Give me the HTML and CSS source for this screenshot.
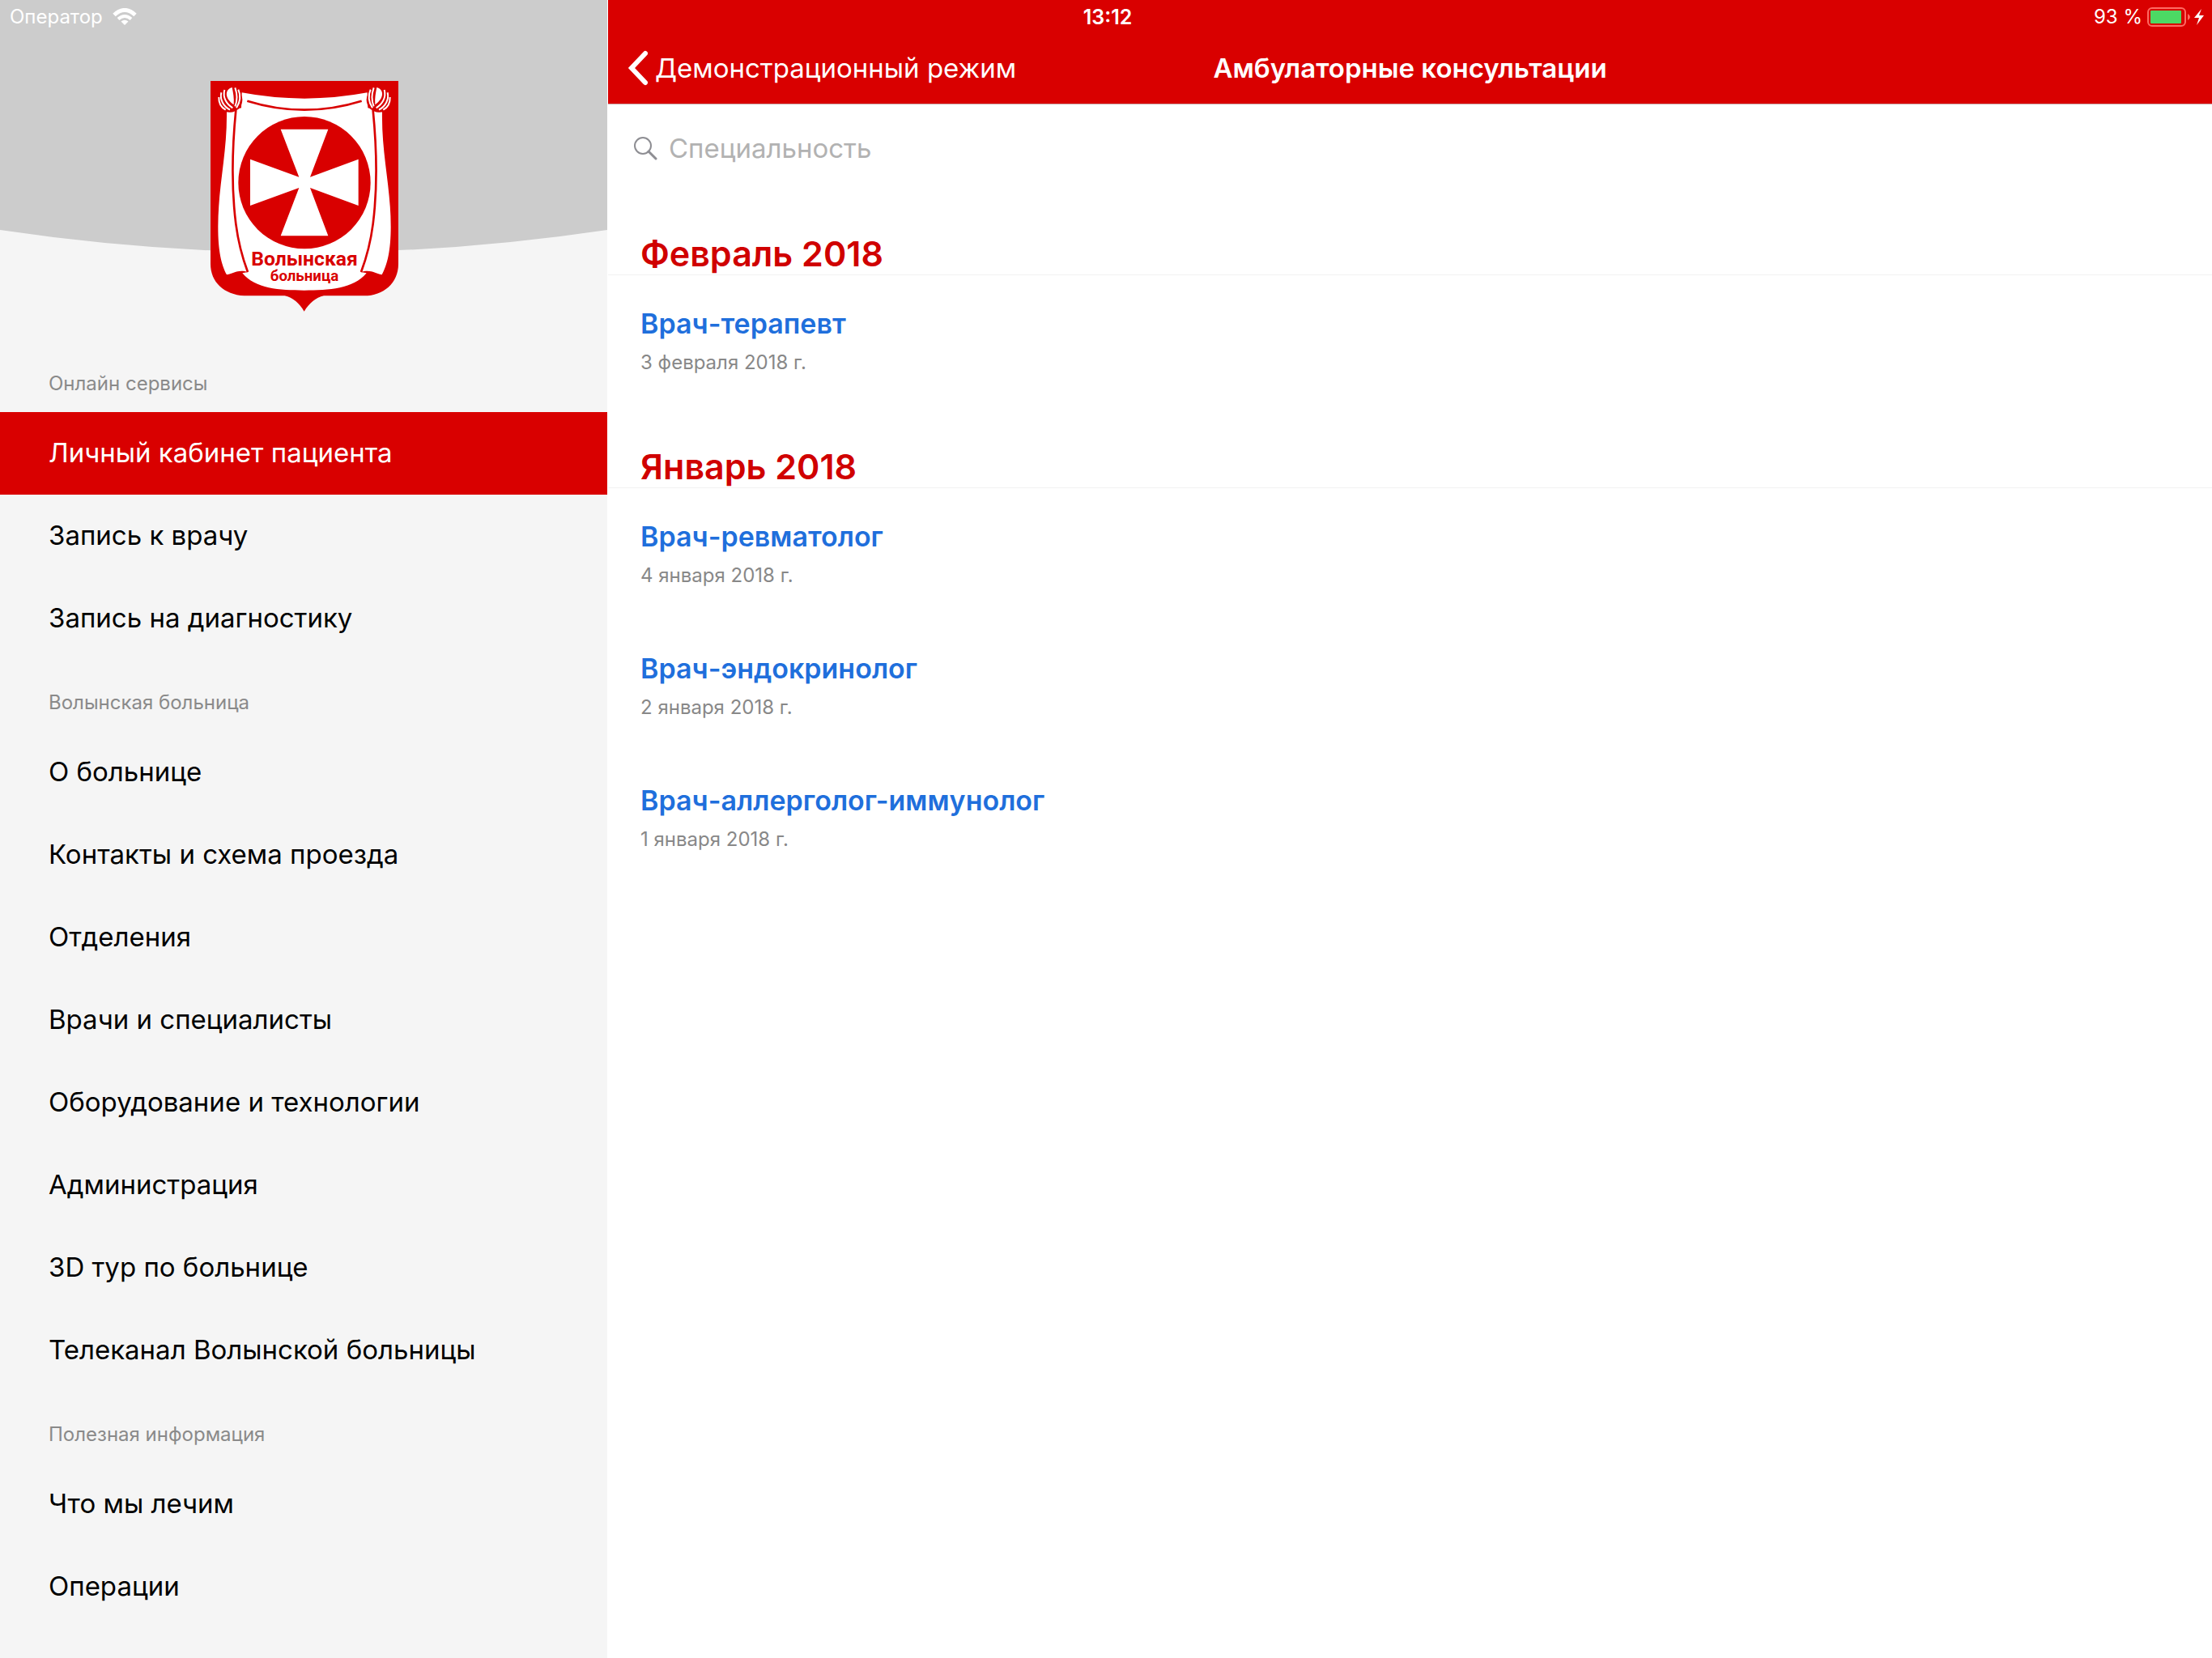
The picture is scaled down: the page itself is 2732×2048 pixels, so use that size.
FILE: index.html
```html
<!DOCTYPE html>
<html lang="ru">
<head>
<meta charset="utf-8">
<meta name="viewport" content="width=device-width, initial-scale=1">
<title>Амбулаторные консультации</title>
<link rel="stylesheet" href="styles.css">
</head>
<body>
<div class="app">
  <div class="status-bar">
    <div class="status-left">
      <span>Оператор</span>
      <svg class="wifi" viewBox="0 0 30 22" aria-hidden="true"><path d="M2 8.500Q15 -3.500 28 8.500" fill="none" stroke="#fff" stroke-width="5"/><path d="M7 13.500Q15 6.500 23 13.500" fill="none" stroke="#fff" stroke-width="4"/><path d="M15 21L10.500 16.500Q15 13 19.500 16.500Z" fill="#fff"/></svg>
    </div>
    <span class="clock">13:12</span>
    <div class="status-right">
      <span>93 %</span>
      <svg class="battery" viewBox="0 0 72 24" aria-hidden="true"><rect x="1" y="1" width="46" height="22" rx="5" fill="none" stroke="#ff6b63" stroke-width="2"/><rect x="4" y="4" width="38" height="16" rx="1" fill="#4cd964"/><path d="M50 8Q53 10 53 12T50 16Z" fill="#ff6b63"/><path d="M67 2L58 13H64L61 22L70 10H64Z" fill="#fff"/></svg>
    </div>
  </div>

  <aside class="sidebar">
    <div class="brand">
      <svg class="brand-curve" viewBox="0 0 750 312" preserveAspectRatio="none" aria-hidden="true"><path d="M0 0H750V284Q375 340 0 284Z" fill="#ccc"/></svg>
      <svg class="emblem" viewBox="60 60 696 855" role="img" aria-label="Волынская больница">
        <path d="M60 60H756V738C756 810 700 856 630 856H480C450 862 425 885 407 914C390 885 365 862 335 856H185C110 852 60 805 60 738Z" fill="#d90000"/>
        <path d="M176 103Q408 147 641 103L643 160L696 175C693 330 728 450 728 600C728 690 715 740 695 778C666 772 656 758 616 768L638 772C590 830 500 836 407 836C315 836 226 830 178 772L200 768C160 758 150 772 120 778C100 740 88 690 88 600C88 450 122 330 120 175L174 160Z" fill="#fff"/>
        <g fill="none" stroke="#d90000" stroke-width="8">
          <path d="M196 134Q408 200 620 134"/>
          <path d="M154 168C138 330 140 480 154 590C163 660 178 715 198 768"/>
          <path d="M662 168C678 330 676 480 662 590C653 660 638 715 618 768"/>
        </g>
        <g id="knot">
          <circle cx="132" cy="130" r="46" fill="#d90000"/>
          <path d="M140 84C112 92 112 124 146 148C148 124 144 104 140 84Z" fill="#fff"/>
          <g fill="none" stroke="#fff" stroke-width="6">
            <path d="M112 93C104 122 120 146 142 160"/>
            <path d="M100 103C94 130 108 154 132 167"/>
            <path d="M91 120C90 140 100 158 116 167"/>
            <path d="M151 85C160 110 160 132 151 154"/>
            <path d="M163 92C172 112 170 138 156 160"/>
          </g>
        </g>
        <use href="#knot" transform="translate(816 0) scale(-1 1)"/>
        <circle cx="408" cy="437" r="245" fill="#d90000"/>
        <path d="M320 239H496L429 416L608 350V522L429 456L496 634H320L388 456L207 522V350L388 416Z" fill="#fff"/>
        <text class="emblem-name" x="408" y="745" text-anchor="middle">Волынская</text>
        <text class="emblem-kind" x="408" y="800" text-anchor="middle">больница</text>
      </svg>
    </div>

    <nav class="menu">
      <h2 class="menu-title">Онлайн сервисы</h2>
      <a class="menu-item menu-item-active" href="#" aria-current="page">Личный кабинет пациента</a>
      <a class="menu-item" href="#">Запись к врачу</a>
      <a class="menu-item" href="#">Запись на диагностику</a>
      <h2 class="menu-title">Волынская больница</h2>
      <a class="menu-item" href="#">О больнице</a>
      <a class="menu-item" href="#">Контакты и схема проезда</a>
      <a class="menu-item" href="#">Отделения</a>
      <a class="menu-item" href="#">Врачи и специалисты</a>
      <a class="menu-item" href="#">Оборудование и технологии</a>
      <a class="menu-item" href="#">Администрация</a>
      <a class="menu-item" href="#">3D тур по больнице</a>
      <a class="menu-item" href="#">Телеканал Волынской больницы</a>
      <h2 class="menu-title">Полезная информация</h2>
      <a class="menu-item" href="#">Что мы лечим</a>
      <a class="menu-item" href="#">Операции</a>
    </nav>
  </aside>

  <main class="content">
    <header class="nav-bar">
      <button class="back" type="button">
        <svg class="chevron" viewBox="0 0 26 44" aria-hidden="true"><path d="M22 4L5 22L22 40" fill="none" stroke="#fff" stroke-width="6" stroke-linecap="round" stroke-linejoin="miter"/></svg>
        <span>Демонстрационный режим</span>
      </button>
      <h1 class="nav-title">Амбулаторные консультации</h1>
    </header>

    <label class="search">
      <svg class="search-icon" viewBox="0 0 30 30" aria-hidden="true"><circle cx="12" cy="12" r="10" fill="none" stroke="#8e8e93" stroke-width="2"/><path d="M19 19L28 28" stroke="#8e8e93" stroke-width="3" stroke-linecap="round"/></svg>
      <input class="search-input" type="search" placeholder="Специальность" aria-label="Специальность">
    </label>

    <section>
      <h2 class="month">Февраль 2018</h2>
      <article class="visit"><a class="visit-title" href="#">Врач-терапевт</a><p class="visit-date">3 февраля 2018 г.</p></article>
    </section>
    <section>
      <h2 class="month">Январь 2018</h2>
      <article class="visit"><a class="visit-title" href="#">Врач-ревматолог</a><p class="visit-date">4 января 2018 г.</p></article>
      <article class="visit"><a class="visit-title" href="#">Врач-эндокринолог</a><p class="visit-date">2 января 2018 г.</p></article>
      <article class="visit"><a class="visit-title" href="#">Врач-аллерголог-иммунолог</a><p class="visit-date">1 января 2018 г.</p></article>
    </section>
  </main>
</div>
</body>
</html>
```
FILE: styles.css
```css
* { box-sizing: border-box; }

body {
  margin: 0;
  font-family: Inter, "Liberation Sans", sans-serif;
  color: #000;
  background: #fff;
}

h1, h2, p { margin: 0; }
a { text-decoration: none; }

.app {
  position: relative;
  display: grid;
  grid-template-columns: 750px 1fr;
  column-gap: 1px;
  min-height: 100vh;
}

.status-bar {
  position: absolute;
  z-index: 1;
  top: 0;
  left: 0;
  right: 0;
  display: grid;
  grid-template-columns: 1fr auto 1fr;
  align-items: center;
  height: 41px;
  padding: 0 8px 0 12px;
  font-size: 24px;
  color: #fff;
}
.status-left, .status-right { display: flex; align-items: center; }
.status-left { gap: 12px; }
.status-right { justify-content: flex-end; gap: 6px; }
.clock { font-size: 25px; font-weight: 600; }
.wifi { width: 30px; height: 22px; }
.battery { width: 72px; height: 24px; }

.sidebar { background: #f5f5f5; }
.brand {
  position: relative;
  display: flex;
  justify-content: center;
  height: 421px;
  padding: 100px 0 0 2px;
}
.brand-curve {
  position: absolute;
  top: 0;
  left: 0;
  width: 100%;
  height: 312px;
}
.emblem { position: relative; width: 232px; height: 285px; }
.emblem-name, .emblem-kind {
  font-family: Roboto, sans-serif;
  font-weight: 700;
  fill: #d90000;
}
.emblem-name { font-size: 74px; }
.emblem-kind { font-size: 56px; }

.menu-title {
  height: 88px;
  padding: 37px 60px 0;
  font-size: 24px;
  line-height: 32px;
  font-weight: 400;
  color: #8a8a8a;
}
.menu-item {
  display: block;
  padding: 0 60px 2px;
  font-size: 33px;
  line-height: 100px;
  color: #000;
}
.menu-item-active { background: #d90000; color: #fff; }

.nav-bar {
  display: grid;
  grid-template-columns: 1fr auto 1fr;
  align-items: center;
  height: 129px;
  padding: 39px 24px 0;
  border-bottom: 1px solid #c9a5a5;
  background: #d90000;
  color: #fff;
}
.back {
  display: flex;
  align-items: center;
  gap: 8px;
  padding: 0;
  border: 0;
  background: none;
  font: inherit;
  font-size: 33px;
  color: inherit;
}
.chevron { width: 26px; height: 44px; }
.nav-title { font-size: 33px; font-weight: 600; }

.search {
  display: flex;
  align-items: center;
  gap: 14px;
  height: 111px;
  padding: 0 31px 4px;
}
.search-icon { width: 30px; height: 30px; }
.search-input {
  flex: 1;
  padding: 0;
  border: 0;
  outline: 0;
  background: none;
  font: inherit;
  font-size: 33px;
}
.search-input::placeholder { color: #b2b2b2; opacity: 1; }

.month {
  height: 100px;
  padding: 47px 40px 0;
  border-bottom: 1px solid #f2f2f2;
  font-size: 43px;
  line-height: 52px;
  font-weight: 600;
  color: #d00000;
}
.visit {
  height: 163px;
  padding: 38px 40px 0;
}
.visit-title {
  display: block;
  font-size: 34px;
  line-height: 44px;
  font-weight: 600;
  color: #1f6fdc;
}
.visit-date {
  padding-top: 10px;
  font-size: 24px;
  line-height: 32px;
  color: #888;
}
```
